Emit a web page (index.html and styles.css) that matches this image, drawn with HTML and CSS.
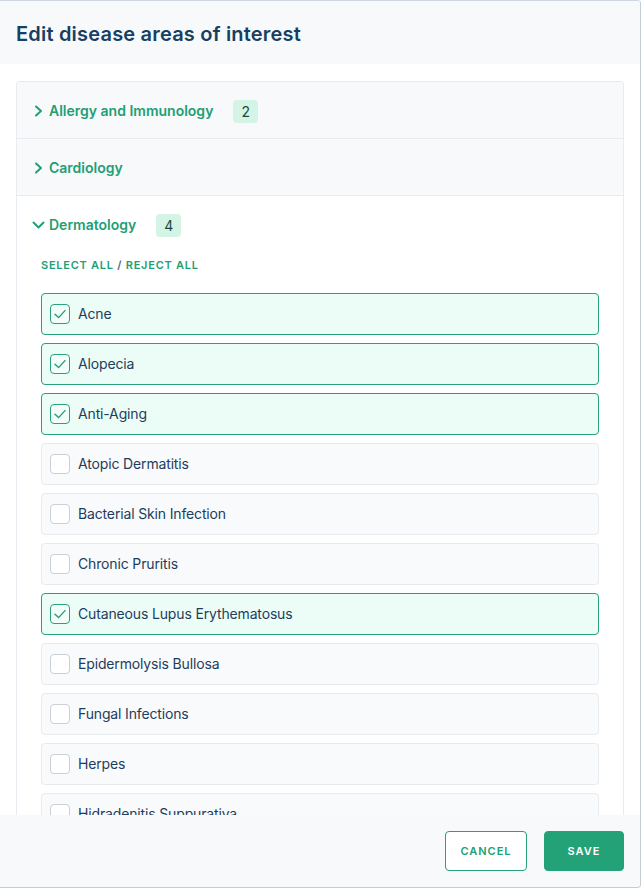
FILE: index.html
```html
<!DOCTYPE html>
<html>
<head>
<meta charset="utf-8">
<link rel="stylesheet" href="styles.css">
</head>
<body>
<div class="modal">
  <header class="modal-header">
    <h1 class="title">Edit disease areas of interest</h1>
  </header>
  <div class="modal-body">
    <div class="accordion">
      <div class="acc-item">
        <div class="acc-head">
          <svg class="chev" width="12" height="14" viewBox="0 0 12 14"><path d="M3 2.5 L8 7 L3 11.5" fill="none" stroke="currentColor" stroke-width="2" stroke-linecap="round" stroke-linejoin="round"/></svg>
          <span class="acc-title">Allergy and Immunology</span>
          <span class="badge">2</span>
        </div>
      </div>
      <div class="acc-item">
        <div class="acc-head">
          <svg class="chev" width="12" height="14" viewBox="0 0 12 14"><path d="M3 2.5 L8 7 L3 11.5" fill="none" stroke="currentColor" stroke-width="2" stroke-linecap="round" stroke-linejoin="round"/></svg>
          <span class="acc-title">Cardiology</span>
        </div>
      </div>
      <div class="acc-item open">
        <div class="acc-head">
          <svg class="chev down" width="14" height="14" viewBox="0 0 14 14"><path d="M1.5 4.5 L6.5 9.5 L11.5 4.5" fill="none" stroke="currentColor" stroke-width="2" stroke-linecap="round" stroke-linejoin="round"/></svg>
          <span class="acc-title">Dermatology</span>
          <span class="badge">4</span>
        </div>
        <div class="acc-panel">
          <div class="bulk"><span>SELECT ALL</span> <span class="slash">/</span> <span>REJECT ALL</span></div>
          <ul class="options">
            <li class="option checked"><span class="box"><svg width="20" height="20" viewBox="0 0 20 20"><path d="M5 10.2 L8.6 13.6 L15 6.6" fill="none" stroke="currentColor" stroke-width="1.4" stroke-linecap="round" stroke-linejoin="round"/></svg></span><span class="label">Acne</span></li>
            <li class="option checked"><span class="box"><svg width="20" height="20" viewBox="0 0 20 20"><path d="M5 10.2 L8.6 13.6 L15 6.6" fill="none" stroke="currentColor" stroke-width="1.4" stroke-linecap="round" stroke-linejoin="round"/></svg></span><span class="label">Alopecia</span></li>
            <li class="option checked"><span class="box"><svg width="20" height="20" viewBox="0 0 20 20"><path d="M5 10.2 L8.6 13.6 L15 6.6" fill="none" stroke="currentColor" stroke-width="1.4" stroke-linecap="round" stroke-linejoin="round"/></svg></span><span class="label">Anti-Aging</span></li>
            <li class="option"><span class="box"></span><span class="label">Atopic Dermatitis</span></li>
            <li class="option"><span class="box"></span><span class="label">Bacterial Skin Infection</span></li>
            <li class="option"><span class="box"></span><span class="label">Chronic Pruritis</span></li>
            <li class="option checked"><span class="box"><svg width="20" height="20" viewBox="0 0 20 20"><path d="M5 10.2 L8.6 13.6 L15 6.6" fill="none" stroke="currentColor" stroke-width="1.4" stroke-linecap="round" stroke-linejoin="round"/></svg></span><span class="label">Cutaneous Lupus Erythematosus</span></li>
            <li class="option"><span class="box"></span><span class="label">Epidermolysis Bullosa</span></li>
            <li class="option"><span class="box"></span><span class="label">Fungal Infections</span></li>
            <li class="option"><span class="box"></span><span class="label">Herpes</span></li>
            <li class="option"><span class="box"></span><span class="label">Hidradenitis Suppurativa</span></li>
          </ul>
        </div>
      </div>
    </div>
  </div>
  <footer class="modal-footer">
    <button class="btn btn-outline">CANCEL</button>
    <button class="btn btn-primary">SAVE</button>
  </footer>
</div>
</body>
</html>
```
FILE: styles.css
```css
* { box-sizing: border-box; }
html, body { margin: 0; padding: 0; }
body {
  font-family: Inter, "Noto Sans", sans-serif;
  background: #ffffff;
  width: 641px;
  height: 888px;
  overflow: hidden;
}
.modal {
  width: 641px;
  height: 888px;
  display: flex;
  flex-direction: column;
  border-top: 1px solid #cfd8e1;
  border-right: 1px solid #c2ccd6;
  border-bottom: 1px solid #c2ccd6;
  border-radius: 0 4px 4px 0;
  overflow: hidden;
  background: #fff;
}
.modal-header {
  height: 63px;
  flex: none;
  background: #f7f9fb;
  display: flex;
  align-items: center;
  padding: 2px 16px 0 16px;
}
.title {
  margin: 0;
  font-size: 20px;
  line-height: 24px;
  font-weight: 600;
  color: #173f62;
  letter-spacing: 0.2px;
}
.modal-body {
  flex: 1;
  overflow: hidden;
  padding: 17px 16px 0 16px;
  background: #fff;
}
.accordion {
  border: 1px solid #e8ebef;
  border-radius: 3px 3px 0 0;
}
.acc-item { border-bottom: 1px solid #e8ebef; }
.acc-head {
  height: 56px;
  display: flex;
  align-items: center;
  padding-left: 16px;
  padding-top: 2px;
  background: #f8f9fb;
  color: #219f75;
}
.acc-item.open .acc-head { background: #fff; }
.chev { flex: none; margin-right: 4px; }
.chev.down { margin-left: -1px; margin-right: 3px; }
.acc-title {
  font-size: 14px;
  font-weight: 600;
  line-height: 20px;
}
.badge {
  margin-left: 20px;
  min-width: 25px;
  height: 23px;
  border-radius: 4px;
  background: #d4f5e5;
  color: #1d4a3e;
  font-size: 14px;
  line-height: 23px;
  text-align: center;
}
.acc-panel { padding: 0 24px 24px 24px; }
.bulk {
  font-size: 11px;
  font-weight: 600;
  letter-spacing: 0.75px;
  color: #219f75;
  line-height: 14px;
  padding-top: 6px;
  margin-bottom: 21px;
}
.bulk .slash { color: #4a6a88; }
.options {
  list-style: none;
  margin: 0;
  padding: 0;
  display: flex;
  flex-direction: column;
  gap: 8px;
}
.option {
  height: 42px;
  display: flex;
  align-items: center;
  padding-left: 8px;
  border: 1px solid #e7eaee;
  border-radius: 4px;
  background: #f9fafb;
}
.option.checked {
  border-color: #26a178;
  background: #ebfdf6;
}
.box {
  width: 20px;
  height: 20px;
  flex: none;
  border: 1px solid #c9d0d8;
  border-radius: 4px;
  background: #fff;
  display: flex;
  color: #219f75;
}
.box svg { margin: -1px; }
.option.checked .box { border-color: #2aa27a; background: #f3fefa; }
.label {
  margin-left: 8px;
  font-size: 14px;
  line-height: 20px;
  color: #1d3d5e;
  letter-spacing: -0.15px;
}
.modal-footer {
  height: 72px;
  flex: none;
  background: #f7f9fb;
  display: flex;
  justify-content: flex-end;
  align-items: flex-start;
  gap: 17px;
  padding: 16px 16px 0 0;
}
.btn {
  height: 40px;
  border-radius: 4px;
  font-family: Inter, "Noto Sans", sans-serif;
  font-size: 11px;
  font-weight: 600;
  letter-spacing: 1px;
  cursor: pointer;
}
.btn-outline {
  width: 82px;
  background: #fff;
  border: 1px solid #26a178;
  color: #219f75;
}
.btn-primary {
  width: 80px;
  background: #22a276;
  border: 1px solid #22a276;
  color: #fff;
}
```
